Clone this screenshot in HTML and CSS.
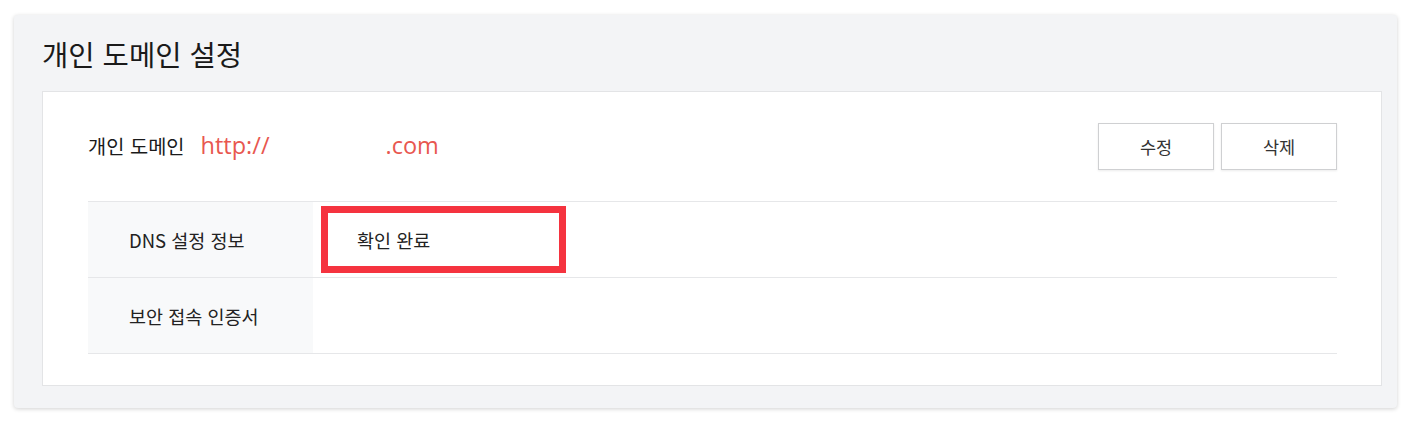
FILE: index.html
```html
<!DOCTYPE html>
<html lang="ko">
<head>
<meta charset="utf-8">
<link rel="stylesheet" href="styles.css">
</head>
<body>
<div class="panel">
  <h1 class="title">개인 도메인 설정</h1>
  <div class="box">
    <div class="domain-row">
      <div class="domain">
        <span class="domain-label">개인 도메인</span>
        <span class="domain-url">http://<span class="blur"></span>.com</span>
      </div>
      <div class="actions">
        <button class="btn">수정</button>
        <button class="btn">삭제</button>
      </div>
    </div>
    <div class="table">
      <div class="row">
        <div class="th">DNS 설정 정보</div>
        <div class="td"><span class="highlight">확인 완료</span></div>
      </div>
      <div class="row">
        <div class="th">보안 접속 인증서</div>
        <div class="td"></div>
      </div>
    </div>
  </div>
</div>
</body>
</html>
```
FILE: styles.css
```css
html, body {
  margin: 0;
  padding: 0;
  background: #ffffff;
}
body {
  padding: 15px 15px 15px 14px;
  font-family: "Noto Sans CJK KR", "Noto Sans", sans-serif;
  color: #222;
}
.panel {
  width: 1383px;
  height: 393px;
  box-sizing: border-box;
  background: #f3f4f6;
  border-radius: 4px;
  box-shadow: 0 1px 4px rgba(0,0,0,0.18);
  padding: 0 15px 0 28px;
}
.title {
  margin: 0;
  height: 76px;
  font-size: 28.6px;
  font-weight: 400;
  line-height: 78px;
  color: #1a1a1a;
}
.box {
  background: #fff;
  border: 1px solid #e3e4e6;
  height: 295px;
  box-sizing: border-box;
  padding: 31px 44px 0 45px;
}
.domain-row {
  display: flex;
  justify-content: space-between;
  align-items: center;
  height: 47px;
}
.domain {
  display: flex;
  align-items: center;
  margin-top: -3px;
}
.domain-label {
  font-size: 19.8px;
  color: #1a1a1a;
  margin-right: 16px;
}
.domain-url {
  font-family: "Open Sans", "Noto Sans", sans-serif;
  font-size: 23.5px;
  color: #e8574f;
}
.blur {
  display: inline-block;
  width: 116px;
  height: 20px;
}
.actions {
  display: flex;
  gap: 7px;
}
.btn {
  width: 116px;
  height: 47px;
  background: #fff;
  border: 1px solid #cfd0d2;
  box-shadow: 0 1px 2px rgba(0,0,0,0.08);
  font-family: "Noto Sans CJK KR", sans-serif;
  font-size: 17.5px;
  color: #333;
  padding: 0;
}
.table {
  margin-top: 31px;
  border-top: 1px solid #e6e7e9;
}
.row {
  display: flex;
  height: 76px;
  border-bottom: 1px solid #e6e7e9;
  box-sizing: border-box;
}
.th {
  width: 225px;
  background: #f8f9fa;
  box-sizing: border-box;
  padding-left: 41px;
  display: flex;
  align-items: center;
  font-size: 18.5px;
  color: #222;
}
.td {
  flex: 1;
  display: flex;
  align-items: center;
  padding-left: 8px;
}
.highlight {
  display: flex;
  align-items: center;
  width: 245px;
  height: 67px;
  box-sizing: border-box;
  border: 7px solid #f5333f;
  padding-left: 29px;
  font-size: 18.5px;
  color: #222;
}
```
